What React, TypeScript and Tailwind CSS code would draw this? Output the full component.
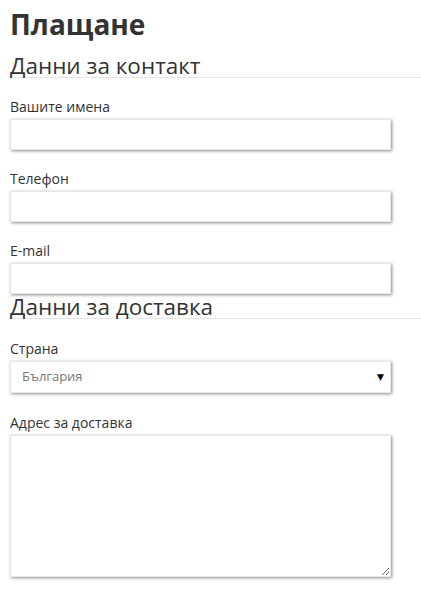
const font = { fontFamily: '"Open Sans", "DejaVu Sans", sans-serif' };

function Label({ children }: { children: string }) {
  return <label className="mb-[2px] block text-[14px] leading-[20px] text-[#333]">{children}</label>;
}

const boxClass =
  'block h-[31px] w-[381px] border border-[#e6e6e6] bg-white shadow-[1px_1px_3px_rgba(0,0,0,0.45)] outline-none';

function Field({ label, type = 'text' }: { label: string; type?: string }) {
  return (
    <div className="pt-[19px]">
      <Label>{label}</Label>
      <input type={type} className={boxClass} />
    </div>
  );
}

function Section({ title }: { title: string }) {
  return (
    <h2 className="ml-[10px] h-[25px] border-b border-[#e5e5e5] text-[22.5px] leading-[25px] font-normal text-[#333]">
      {title}
    </h2>
  );
}

export default function App() {
  return (
    <div className="min-h-[592px] bg-white" style={font}>
      <h1 className="px-[10px] pt-[6px] text-[28px] leading-[36px] font-bold text-[#333]">Плащане</h1>
      <div className="mt-[11px]">
        <Section title="Данни за контакт" />
      </div>
      <div className="pl-[10px]">
        <Field label="Вашите имена" />
        <Field label="Телефон" type="tel" />
        <Field label="E-mail" type="email" />
      </div>
      <Section title="Данни за доставка" />
      <div className="pl-[10px]">
        <div className="pt-[20px]">
          <Label>Страна</Label>
          <div className="relative w-[381px]">
            <select className={boxClass + ' h-[32px] appearance-none pl-[11px] text-[13px] text-[#777]'} defaultValue="bg">
              <option value="bg">България</option>
            </select>
            <span className="pointer-events-none absolute top-[10px] right-[7px] text-[9px] leading-[12px] text-black">▼</span>
          </div>
        </div>
        <div className="pt-[20px]">
          <Label>Адрес за доставка</Label>
          <textarea className={boxClass + ' h-[142px] resize-y'} />
        </div>
      </div>
    </div>
  );
}
